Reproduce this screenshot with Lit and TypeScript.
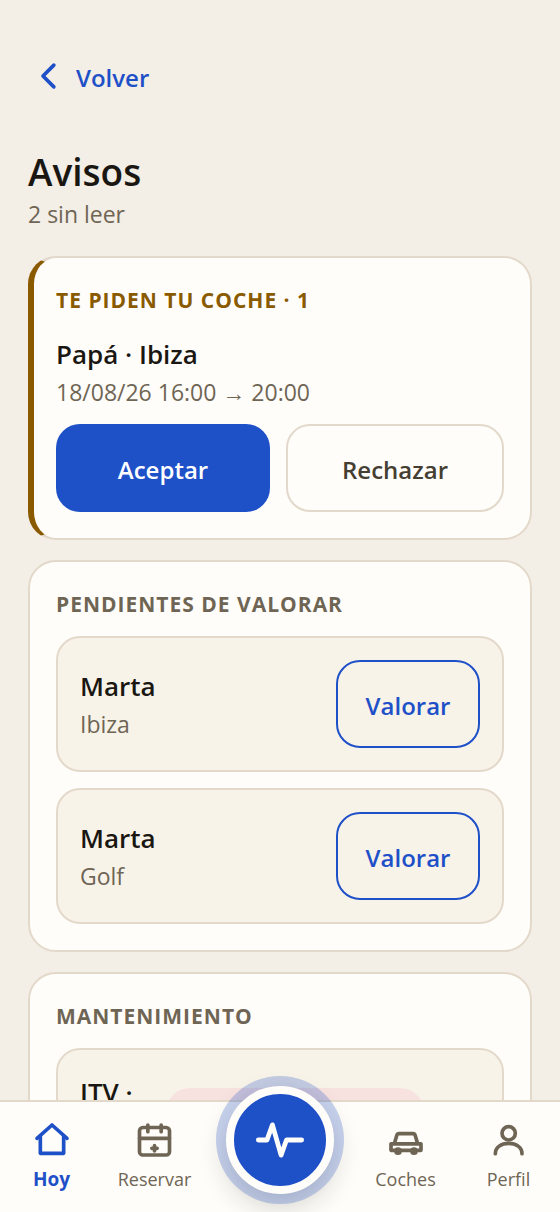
import { LitElement, html, css, svg } from "lit";
import { customElement, property } from "lit/decorators.js";

const icons = {
  back: svg`<path d="M15.5 5.5 9 12l6.5 6.5" />`,
  home: svg`<path d="M3 11l9-8 9 8" /><path d="M5 10v10h14V10" />`,
  calendar: svg`<rect x="2.7" y="4.5" width="18" height="16.5" rx="2" /><path d="M2.7 11h18M7.7 3v4M15.7 3v4M11.7 15.4v3.2M10.1 17h3.2" />`,
  pulse: svg`<path d="M2 12h4l2.5-7 4 14 2.5-7h7" />`,
  car: svg`<path d="M3 14.3h18v3.9H3zM5 14.3 6.5 9.2q.3-1 1.300-1h8.4q1 0 1.3 1L19 14.3" /><circle cx="7.2" cy="18.700" r="1.2" /><circle cx="16.8" cy="18.7" r="1.2" />`,
  user: svg`<circle cx="11.8" cy="8" r="4" /><path d="M3.8 20.2c0-3.8 3.500-6.2 8-6.2s8 2.4 8 6.2" />`,
};

@customElement("app-icon")
export class AppIcon extends LitElement {
  @property() name: keyof typeof icons = "home";

  static styles = css`
    :host {
      display: block;
      width: 40px;
      height: 40px;
    }
    svg {
      display: block;
      width: 100%;
      height: 100%;
      fill: none;
      stroke: currentColor;
      stroke-width: 2.2;
      stroke-linecap: round;
      stroke-linejoin: round;
    }
  `;

  render() {
    return html`<svg viewBox="0 0 24 24" aria-hidden="true">${icons[this.name]}</svg>`;
  }
}

@customElement("app-root")
export class AppRoot extends LitElement {
  static styles = css`
    :host {
      display: flex;
      flex-direction: column;
      height: 100vh;
      background: #f3eee6;
      color: #1a1712;
      font-family: "Open Sans", "Noto Sans", sans-serif;
      font-size: 24px;
      line-height: 32px;
    }
    * {
      box-sizing: border-box;
    }
    main {
      flex: 1;
      min-height: 0;
      overflow-y: auto;
      scrollbar-width: none;
      padding: 34px 28px 0;
    }
    button {
      font: inherit;
      font-weight: 600;
      cursor: pointer;
    }
    h1,
    h2,
    h3,
    p {
      margin: 0;
    }
    .back {
      display: flex;
      align-items: center;
      gap: 8px;
      height: 88px;
      padding: 0;
      border: 0;
      background: none;
      color: #1e50c8;
    }
    .back app-icon {
      margin-bottom: 4px;
    }
    h1 {
      margin-top: 24px;
      font-size: 37px;
      line-height: 52px;
      font-weight: 600;
    }
    .muted {
      color: #6f6555;
      font-size: 23px;
    }
    .cards {
      display: flex;
      flex-direction: column;
      gap: 20px;
      margin-top: 26px;
    }
    .card {
      display: flex;
      flex-direction: column;
      gap: 16px;
      padding: 26px;
      border: 2px solid #e3d9cb;
      border-radius: 28px;
      background: #fffdf9;
    }
    .request {
      padding-left: 22px;
      border-left: 6px solid #8a5a00;
    }
    h2 {
      font-size: 21px;
      line-height: 32px;
      font-weight: 700;
      color: #6f6555;
      text-transform: uppercase;
      letter-spacing: 1px;
    }
    .request h2 {
      color: #8a5a00;
    }
    h3 {
      font-size: 26px;
      line-height: 36px;
      font-weight: 600;
    }
    .summary {
      display: flex;
      flex-direction: column;
      gap: 4px;
    }
    .request .summary {
      padding-top: 4px;
    }
    .actions {
      display: flex;
      gap: 16px;
    }
    .btn {
      height: 88px;
      padding: 4px 24px 0;
      border: 2px solid #e3d9cb;
      border-radius: 24px;
      background: transparent;
      color: #453e33;
    }
    .actions .btn {
      flex: 1;
    }
    .primary {
      border: 0;
      background: #1e50c8;
      color: #ffffff;
    }
    .outline {
      min-width: 144px;
      border-color: #1e50c8;
      color: #1e50c8;
    }
    .row {
      display: flex;
      align-items: center;
      justify-content: space-between;
      gap: 12px;
      padding: 22px;
      border: 2px solid #e3d9cb;
      border-radius: 24px;
      background: #f8f3e9;
    }
    .service {
      display: grid;
      grid-template-columns: 74px 1fr 44px;
      align-items: start;
    }
    .service h3 {
      line-height: 40px;
    }
    .status {
      height: 48px;
      margin-top: 16px;
      border-radius: 24px;
      background: #f7e2e0;
    }
    nav {
      display: grid;
      grid-template-columns: 1fr 1fr 148px 1fr 1fr;
      height: 112px;
      border-top: 2px solid #e3d9cb;
      background: #fffdf9;
    }
    .tab {
      display: flex;
      flex-direction: column;
      align-items: center;
      gap: 3px;
      padding-top: 18px;
      color: #6f6555;
      font-size: 18px;
      text-decoration: none;
    }
    .current {
      color: #1e50c8;
      font-size: 19px;
      font-weight: 700;
    }
    .pulse {
      display: flex;
      align-items: center;
      justify-content: center;
      justify-self: center;
      width: 108px;
      height: 108px;
      margin-top: -16px;
      padding: 0;
      border: 8px solid #fffdf9;
      border-radius: 50%;
      background: #1e50c8;
      color: #fffdf9;
      box-shadow:
        0 0 0 10px rgba(30, 80, 200, 0.25),
        0 12px 28px rgba(26, 23, 18, 0.2);
      z-index: 1;
    }
    .pulse app-icon {
      width: 52px;
      height: 52px;
    }
  `;

  private pending = [
    { name: "Marta", car: "Ibiza" },
    { name: "Marta", car: "Golf" },
  ];

  render() {
    return html`
      <main>
        <button class="back"><app-icon name="back"></app-icon>Volver</button>
        <h1>Avisos</h1>
        <p class="muted">2 sin leer</p>
        <div class="cards">
          <section class="card request">
            <h2>Te piden tu coche · 1</h2>
            <div class="summary">
              <h3>Papá · Ibiza</h3>
              <p class="muted">18/08/26 16:00 → 20:00</p>
            </div>
            <div class="actions">
              <button class="btn primary">Aceptar</button>
              <button class="btn">Rechazar</button>
            </div>
          </section>
          <section class="card">
            <h2>Pendientes de valorar</h2>
            ${this.pending.map(
              (item) => html`
                <div class="row">
                  <div class="summary">
                    <h3>${item.name}</h3>
                    <p class="muted">${item.car}</p>
                  </div>
                  <button class="btn outline">Valorar</button>
                </div>
              `,
            )}
          </section>
          <section class="card">
            <h2>Mantenimiento</h2>
            <div class="row service">
              <h3>ITV ·</h3>
              <div class="status"></div>
            </div>
          </section>
        </div>
      </main>
      <nav>
        <a class="tab current" href="#hoy"><app-icon name="home"></app-icon>Hoy</a>
        <a class="tab" href="#reservar"><app-icon name="calendar"></app-icon>Reservar</a>
        <button class="pulse" aria-label="Estado"><app-icon name="pulse"></app-icon></button>
        <a class="tab" href="#coches"><app-icon name="car"></app-icon>Coches</a>
        <a class="tab" href="#perfil"><app-icon name="user"></app-icon>Perfil</a>
      </nav>
    `;
  }
}
